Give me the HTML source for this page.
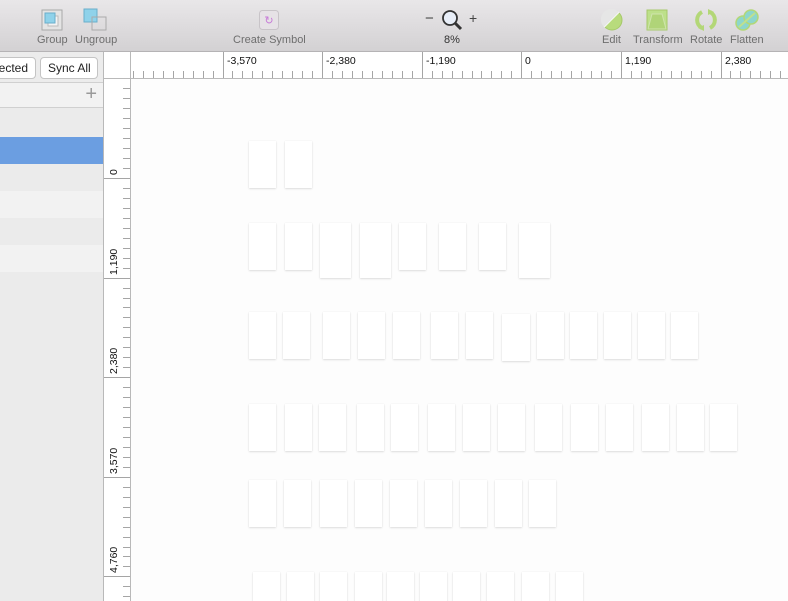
<!DOCTYPE html>
<html><head><meta charset="utf-8"><style>
*{margin:0;padding:0;box-sizing:border-box}
html,body{width:788px;height:601px;overflow:hidden}
body{position:relative;background:#fdfdfd;font-family:"Liberation Sans",sans-serif}
#tb{position:absolute;left:0;top:0;width:788px;height:52px;background:linear-gradient(#e9e7e9,#d3d1d3);border-bottom:1px solid #b5b3b5}
.lbl{position:absolute;top:34px;font-size:11px;color:#6e6e6e;white-space:nowrap}
#side{position:absolute;left:0;top:52px;width:104px;height:549px;background:#ececec;border-right:1px solid #b9b9b9;overflow:hidden}
.btn{position:absolute;top:5px;height:22px;border:1px solid #c4c4c4;border-radius:4px;background:#fff;font-size:12px;color:#222;line-height:20px;padding:0 7px;white-space:nowrap}
.row{position:absolute;left:0;width:103px;height:27px}
#rt{position:absolute;left:104px;top:52px;width:684px;height:27px;background:#fff;border-bottom:1px solid #b9b9b9;overflow:hidden}
#rl{position:absolute;left:104px;top:79px;width:27px;height:522px;background:#fff;border-right:1px solid #b9b9b9;overflow:hidden}
.t{position:absolute;background:#a5a5a5}
.rn{position:absolute;font-size:10.5px;color:#111;white-space:nowrap}
.ab{position:absolute;background:#fff;box-shadow:0 1px 2px rgba(0,0,0,.12),0 0 1px rgba(0,0,0,.08)}
</style></head><body>
<div id="tb">
<svg style="position:absolute;left:41px;top:9px" width="22" height="22"><rect x="1" y="1" width="20" height="20" fill="#e4e4e4" stroke="#a8a8a8"/><rect x="7" y="7" width="10" height="10" fill="#f3f3f3" stroke="#bbb"/><rect x="4" y="4" width="10" height="10" fill="#8fd2ea" stroke="#6aaecb"/></svg>
<div class="lbl" style="left:37px">Group</div>
<svg style="position:absolute;left:83px;top:8px" width="25" height="24"><rect x="1" y="1" width="13" height="13" fill="#8fd2ea" stroke="#6aaecb"/><rect x="9" y="9" width="14" height="13" fill="none" stroke="#aaa"/></svg>
<div class="lbl" style="left:75px">Ungroup</div>
<svg style="position:absolute;left:259px;top:10px" width="20" height="20"><rect x=".5" y=".5" width="19" height="19" rx="3" fill="#e6e2e6" stroke="#c8c4c8"/><text x="10" y="14" font-size="11" fill="#c77ad8" text-anchor="middle" font-family="DejaVu Sans">↻</text></svg>
<div class="lbl" style="left:233px">Create Symbol</div>
<div style="position:absolute;left:425px;top:10px;font-size:15px;color:#444">−</div>
<svg style="position:absolute;left:441px;top:9px" width="22" height="22"><circle cx="9" cy="9" r="7" fill="#e8eef8" stroke="#333" stroke-width="1.8"/><line x1="14" y1="14" x2="20" y2="20" stroke="#333" stroke-width="3"/></svg>
<div style="position:absolute;left:469px;top:10px;font-size:14px;color:#444">+</div>
<div class="lbl" style="left:444px;color:#333">8%</div>
<svg style="position:absolute;left:601px;top:9px" width="22" height="22"><circle cx="11" cy="11" r="10" fill="#b8db7c" stroke="#a6c86a"/><path d="M3 18L18 3" stroke="#fff" stroke-width="1.5"/><path d="M3 18A10 10 0 0 1 18 3" fill="#e6e6e6"/></svg>
<div class="lbl" style="left:602px">Edit</div>
<svg style="position:absolute;left:646px;top:9px" width="22" height="22"><rect x="1" y="1" width="20" height="20" fill="#bde08a" stroke="#a6c86a"/><path d="M6 5H16L20 20H2Z" fill="#b0d478" stroke="#cfe4ad"/></svg>
<div class="lbl" style="left:633px">Transform</div>
<svg style="position:absolute;left:693px;top:8px" width="26" height="24"><path d="M9 4A9 9 0 0 0 9 20" fill="none" stroke="#b3d777" stroke-width="4"/><path d="M17 4A9 9 0 0 1 17 20" fill="none" stroke="#b3d777" stroke-width="4"/><path d="M5 20l6-3v6z M21 4l-6 3V1z" fill="#b3d777"/></svg>
<div class="lbl" style="left:690px">Rotate</div>
<svg style="position:absolute;left:735px;top:9px" width="24" height="22"><circle cx="8" cy="14" r="7" fill="#8dd6cc" stroke="#b3d777" stroke-width="1.5"/><circle cx="16" cy="8" r="7" fill="#8dd6cc" stroke="#b3d777" stroke-width="1.5"/><path d="M4 18L20 4" stroke="#bfe08e" stroke-width="2"/></svg>
<div class="lbl" style="left:730px">Flatten</div>
</div>
<div id="side">
<div class="btn" style="left:-30px;width:66px;text-align:right">Selected</div>
<div class="btn" style="left:40px;width:58px">Sync All</div>
<div class="row" style="top:30px;height:26px;background:#f2f2f2;border-top:1px solid #d0d0d0;border-bottom:1px solid #d0d0d0"><span style="position:absolute;right:6px;top:0;font-size:20px;color:#999">+</span></div>
<div class="row" style="top:56px;background:#ebebeb"></div>
<div class="row" style="top:85px;background:#6b9ee1"></div>
<div class="row" style="top:112px;background:#ebebeb"></div>
<div class="row" style="top:139px;background:#f2f2f2"></div>
<div class="row" style="top:166px;background:#ebebeb"></div>
<div class="row" style="top:193px;background:#f2f2f2"></div>
<div class="row" style="top:220px;background:#ebebeb;height:330px"></div>
</div>
<div id="rt"></div><div id="rl"></div>
<div style="position:absolute;left:104px;top:52px;width:27px;height:27px;background:#fff;border-right:1px solid #b9b9b9;border-bottom:1px solid #b9b9b9"></div>
<div id="c"></div>
<script>
var rt=document.getElementById('rt'),rl=document.getElementById('rl'),h='',v='';
var s=99.6/10;
for(var i=-10;i<70;i++){var x=222.5-104+i*s;if(x<27)continue;if(x>684)break;var maj=(i%10==0);
h+='<div class="t" style="left:'+Math.round(x)+'px;top:'+(maj?0:19)+'px;width:1px;height:'+(maj?27:8)+'px"></div>';}
var labs=['-3,570','-2,380','-1,190','0','1,190','2,380'];
for(var k=0;k<6;k++){h+='<div class="rn" style="left:'+Math.round(222.5-104+k*99.6+4)+'px;top:3px">'+labs[k]+'</div>';}
rt.innerHTML=h;
for(var i=-10;i<60;i++){var y=178-79+i*s;if(y<0)continue;if(y>522)break;var maj=(i%10==0);
v+='<div class="t" style="top:'+Math.round(y)+'px;left:'+(maj?0:19)+'px;height:1px;width:'+(maj?27:8)+'px"></div>';}
var vl=['0','1,190','2,380','3,570','4,760'];
for(var k=0;k<5;k++){var y=178-79+k*99.6;v+='<div class="rn" style="left:4px;top:'+Math.round(y-3)+'px;transform:rotate(-90deg);transform-origin:0 0;line-height:12px">'+vl[k]+'</div>';}
rl.innerHTML=v;
var rows=[[141,47,[249,285]],[223,47,[249,285,[320,31,55],[360,31,55],399,439,479,[519,31,55]]],
[312,47,[249,283,323,358,393,431,466,[502,28,47,314],537,570,604,638,671]],
[404,47,[249,285,319,357,391,428,463,498,535,571,606,642,677,710]],
[480,47,[249,284,320,355,390,425,460,495,529]],
[572,40,[253,287,320,355,387,420,453,487,522,556]]];
var c='';rows.forEach(function(r){r[2].forEach(function(a){var x=a,w=27,hh=r[1],y=r[0];if(typeof a=='object'){x=a[0];w=a[1];hh=a[2];if(a[3])y=a[3];}
c+='<div class="ab" style="left:'+x+'px;top:'+y+'px;width:'+w+'px;height:'+hh+'px"></div>';});});
document.getElementById('c').innerHTML=c;
</script>
</body></html>
